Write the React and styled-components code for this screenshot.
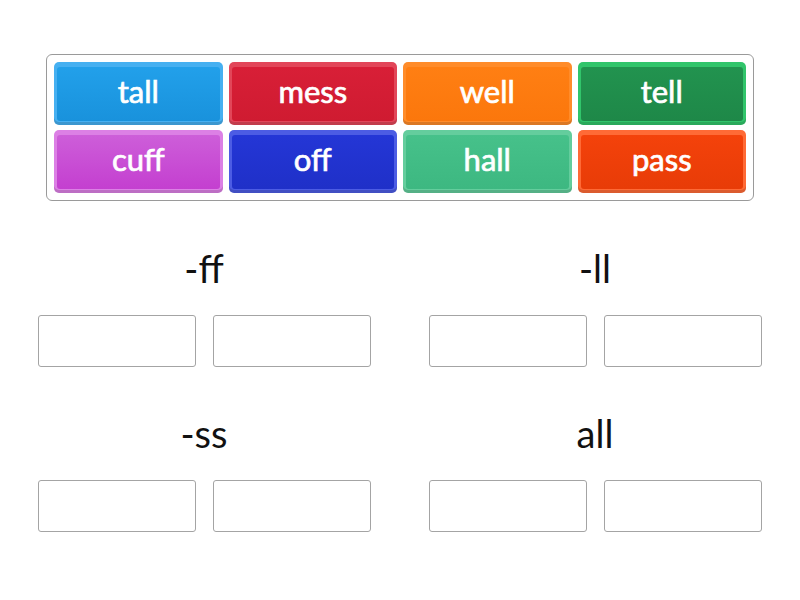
import React from "react";
import styled, { createGlobalStyle } from "styled-components";

const Global = createGlobalStyle`
  html, body { margin: 0; padding: 0; background: #fff; }
  body { font-family: Lato, "Open Sans", sans-serif; }
`;

const Page = styled.div`
  width: 800px;
  height: 600px;
  box-sizing: border-box;
  padding-top: 54px;
`;

const Bank = styled.div`
  box-sizing: border-box;
  margin: 0 46px;
  width: 708px;
  border: 1px solid #9a9a9a;
  border-radius: 6px;
  padding: 7px 7px 7px 7px;
  display: grid;
  grid-template-columns: repeat(4, 1fr);
  grid-auto-rows: 63px;
  gap: 5px 6px;
`;

const Tile = styled.div`
  box-sizing: border-box;
  background: ${(p) => p.$edge};
  border-radius: 5px;
  padding: 5px 3px 4px 3px;
  display: flex;
  box-shadow: inset 0 -3px 0 rgba(0, 0, 0, 0.14);
`;

const Face = styled.div`
  flex: 1;
  border-radius: 3px;
  background: linear-gradient(${(p) => p.$face}, ${(p) => p.$low});
  color: #fff;
  font-size: 31px;
  -webkit-text-stroke: 0.7px #fff;
  display: flex;
  align-items: center;
  justify-content: center;
  padding-bottom: 6px;
  line-height: 1;
`;

const Targets = styled.div`
  display: grid;
  grid-template-columns: 332px 332px;
  column-gap: 59px;
  row-gap: 43px;
  padding: 44px 0 0 38px;
`;

const Group = styled.div`
  display: flex;
  flex-direction: column;
  align-items: center;
`;

const Heading = styled.div`
  font-size: 38px;
  line-height: 46px;
  height: 46px;
  color: #111;
  margin-bottom: 24px;
`;

const Slots = styled.div`
  display: flex;
  gap: 17px;
`;

const Slot = styled.div`
  box-sizing: border-box;
  width: 158px;
  height: 52px;
  border: 1px solid #a4a4a4;
  border-radius: 3px;
  background: #fff;
`;

const tiles = [
  { t: "tall", edge: "#46b0f1", face: "#22a0ea", low: "#1992dc" },
  { t: "mess", edge: "#e24659", face: "#d81f37", low: "#cf1b31" },
  { t: "well", edge: "#ff8c2a", face: "#ff7f13", low: "#fb770c" },
  { t: "tell", edge: "#31c56b", face: "#22934f", low: "#1e8848" },
  { t: "cuff", edge: "#dc80e5", face: "#cd5ed9", low: "#c43fd0" },
  { t: "off", edge: "#4c5ce4", face: "#2436d6", low: "#1f30c8" },
  { t: "hall", edge: "#64cd9d", face: "#46c18a", low: "#3db881" },
  { t: "pass", edge: "#ff6a36", face: "#f4420b", low: "#e83c07" },
];

const groups = ["-ff", "-ll", "-ss", "all"];

export default function App() {
  return (
    <>
      <Global />
      <Page>
        <Bank>
          {tiles.map((x) => (
            <Tile key={x.t} $edge={x.edge}>
              <Face $face={x.face} $low={x.low}>{x.t}</Face>
            </Tile>
          ))}
        </Bank>
        <Targets>
          {groups.map((g) => (
            <Group key={g}>
              <Heading>{g}</Heading>
              <Slots>
                <Slot />
                <Slot />
              </Slots>
            </Group>
          ))}
        </Targets>
      </Page>
    </>
  );
}
